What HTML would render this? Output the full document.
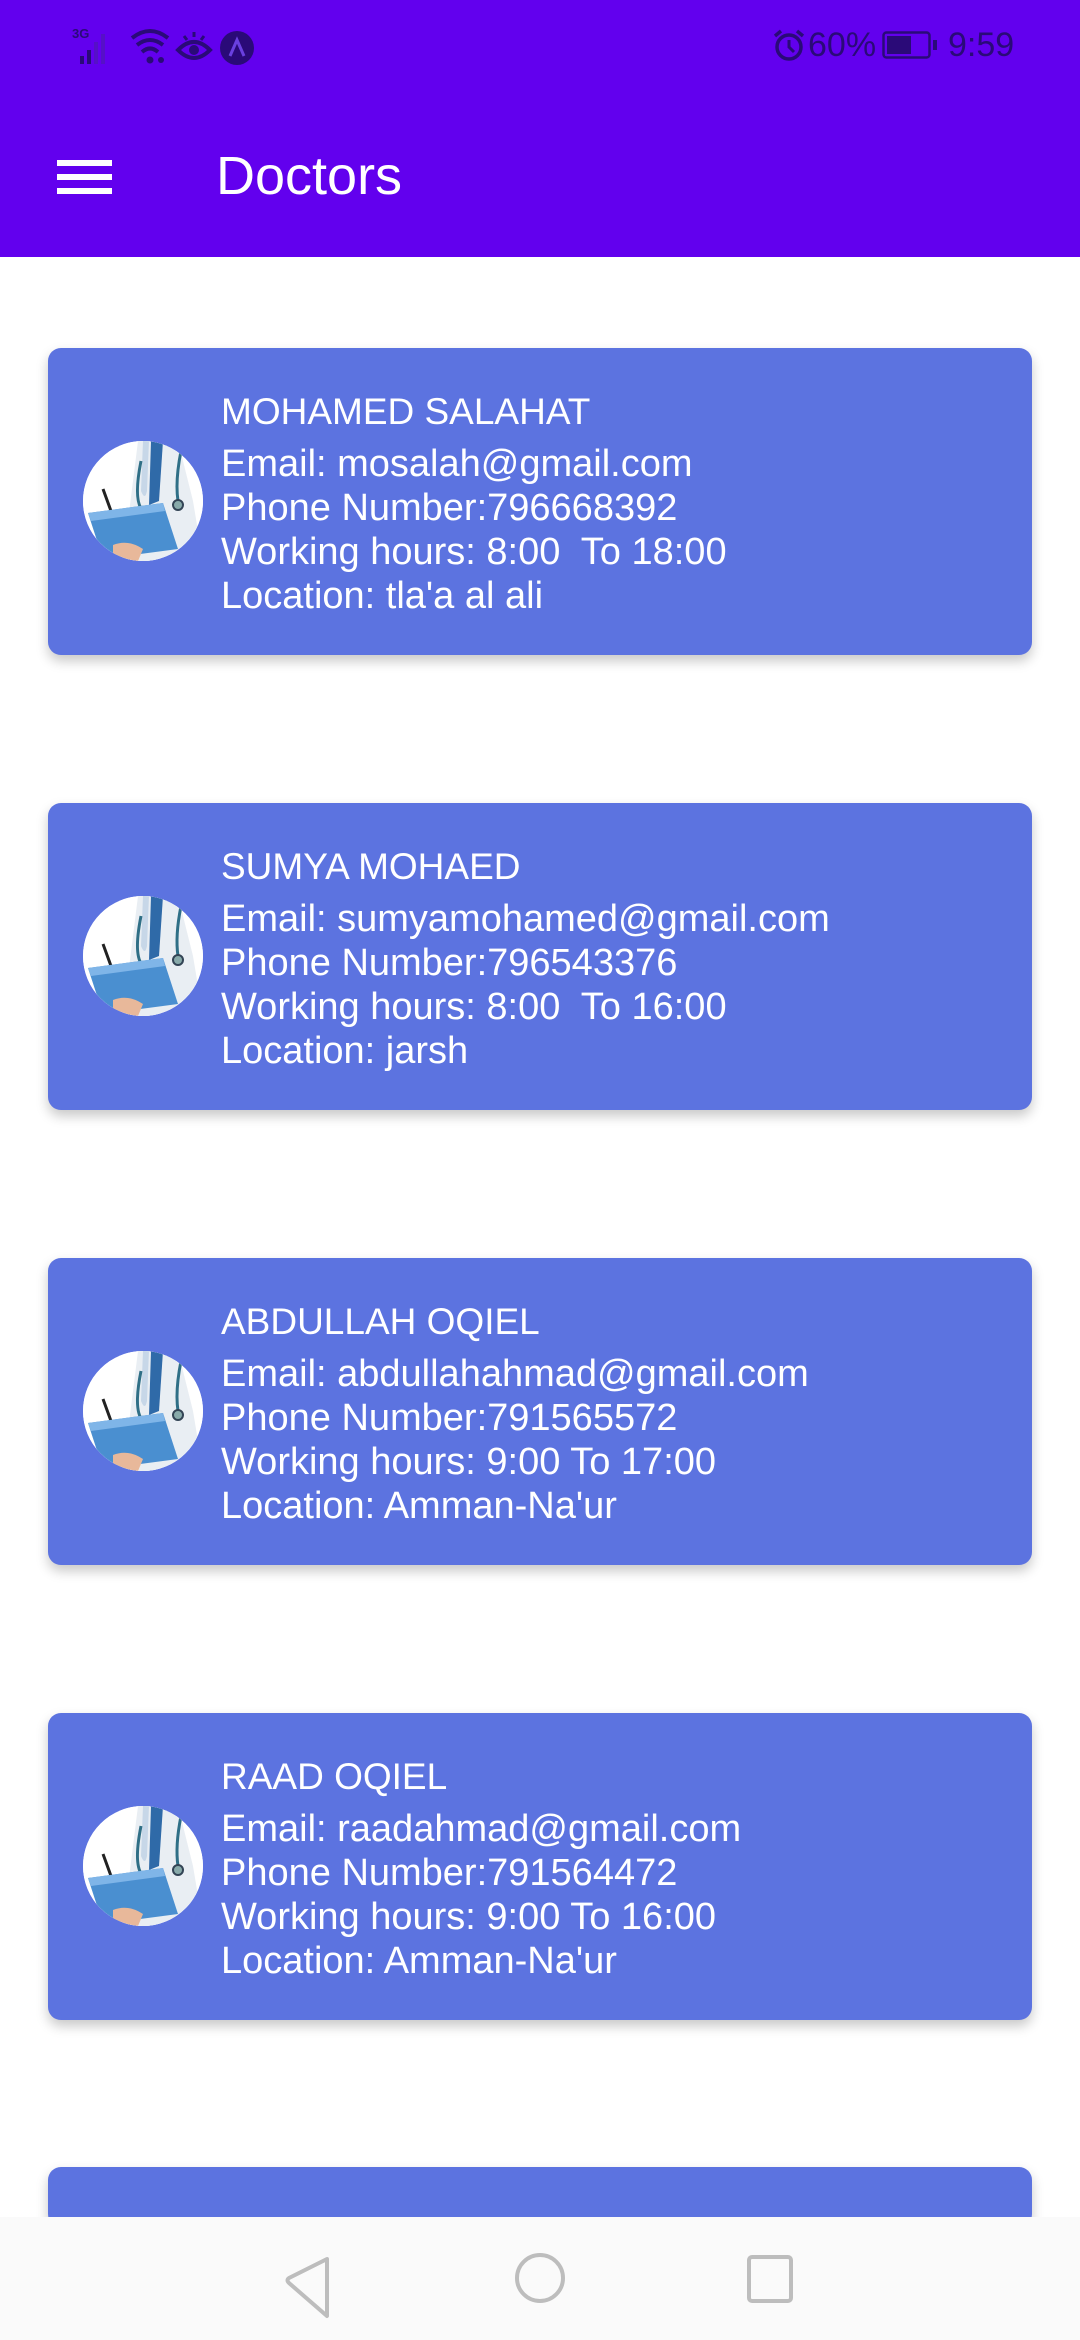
<!DOCTYPE html>
<html><head><meta charset="utf-8">
<style>
*{margin:0;padding:0;box-sizing:border-box}
html,body{width:1080px;height:2340px;overflow:hidden}
body{background:#fff;font-family:"Liberation Sans",Roboto,sans-serif;position:relative}
.hdr{position:absolute;left:0;top:0;width:1080px;height:257px;background:#6200ee}
.sb{position:absolute;top:20px;height:50px;color:#2a0a78;font-size:34px;line-height:50px}
.ham{position:absolute;left:57px;width:55px;height:6px;background:#fff}
.title{position:absolute;left:216px;top:146px;font-size:54px;color:#fff;font-weight:500;line-height:60px}
.card{position:absolute;left:48px;width:984px;height:307px;background:#5c73e0;border-radius:13px;box-shadow:0 6px 12px rgba(0,0,0,0.22)}
.av{position:absolute;left:35px;top:93px;width:120px;height:120px;border-radius:50%;overflow:hidden;background:#fff}
.txt{position:absolute;left:173px;top:42px;color:#fff;font-size:38px;line-height:44px;white-space:pre}
.txt .n{font-size:37px;margin-bottom:8px}
.nav{position:absolute;left:0;top:2217px;width:1080px;height:123px;background:#fafafa;z-index:5}
</style></head><body>
<div class="hdr">
  <svg style="position:absolute;left:70px;top:24px" width="190" height="44" viewBox="0 0 190 44">
    <text x="2" y="14" font-size="13" font-family="Liberation Sans" font-weight="bold" fill="#2a0a78">3G</text>
    <rect x="10" y="32" width="4" height="8" fill="#2a0a78"/><rect x="17" y="26" width="4" height="14" fill="#2a0a78"/>
    <rect x="24" y="18" width="4" height="22" fill="#4a20a0" opacity=".5"/><rect x="31" y="10" width="4" height="30" fill="#4a20a0" opacity=".5"/>
    <path d="M62 14 Q80 0 98 14" stroke="#2a0a78" stroke-width="4" fill="none"/>
    <path d="M67 21 Q80 11 93 21" stroke="#2a0a78" stroke-width="4" fill="none"/>
    <path d="M72 28 Q80 21 88 28" stroke="#2a0a78" stroke-width="4" fill="none"/>
    <circle cx="80" cy="36" r="3.5" fill="#2a0a78"/><circle cx="91" cy="36" r="3" fill="#2a0a78"/>
    <path d="M108 26 Q124 10 140 26 Q124 42 108 26Z" stroke="#2a0a78" stroke-width="4" fill="none"/>
    <circle cx="124" cy="26" r="5" fill="#2a0a78"/>
    <path d="M114 12 l3 4 M124 8 v5 M134 12 l-3 4" stroke="#2a0a78" stroke-width="3"/>
    <circle cx="167" cy="24" r="17" fill="#2a0a78"/>
    <path d="M160 32 L167 16 L174 32" stroke="#6a40e0" stroke-width="3" fill="none"/>
  </svg>
  <svg style="position:absolute;left:772px;top:28px" width="34" height="34" viewBox="0 0 34 34">
    <circle cx="17" cy="19" r="12" stroke="#2a0a78" stroke-width="3.5" fill="none"/>
    <path d="M17 12 V19 L22 24" stroke="#2a0a78" stroke-width="3" fill="none"/>
    <path d="M3 8 L9 3 M31 8 L25 3" stroke="#2a0a78" stroke-width="3.5"/>
  </svg>
  <div class="sb" style="left:808px">60%</div>
  <svg style="position:absolute;left:882px;top:31px" width="56" height="28" viewBox="0 0 56 28">
    <rect x="1.5" y="1.5" width="46" height="25" rx="3" stroke="#2a0a78" stroke-width="2.5" fill="none"/>
    <rect x="5" y="5" width="24" height="18" fill="#2a0a78"/>
    <rect x="51" y="9" width="4" height="10" fill="#2a0a78"/>
  </svg>
  <div class="sb" style="left:948px">9:59</div>
  <div class="ham" style="top:160px"></div>
  <div class="ham" style="top:174px"></div>
  <div class="ham" style="top:188px"></div>
  <div class="title">Doctors</div>
</div>

<svg width="0" height="0" style="position:absolute">
  <defs>
    <g id="doc">
      <rect width="120" height="120" fill="#fff"/>
      <path d="M55 0 L95 0 L110 60 L120 120 L40 120 Z" fill="#e9eef3"/>
      <path d="M68 0 L80 0 L76 60 L66 64 Z" fill="#2f6aa8"/>
      <path d="M60 0 L66 0 L64 50 Q62 60 58 50 Z" fill="#c7d7e8"/>
      <path d="M58 20 Q50 60 60 70 M98 10 Q92 40 95 60" stroke="#2f6f86" stroke-width="3" fill="none"/>
      <circle cx="95" cy="64" r="5" fill="#8aa" stroke="#345" stroke-width="2"/>
      <path d="M20 48 L28 70" stroke="#222" stroke-width="3"/>
      <path d="M5 72 L80 62 L95 108 L20 118 Z" fill="#4a8fd0"/>
      <path d="M5 72 L80 62 L82 70 L8 80 Z" fill="#7fb5e8"/>
      <path d="M30 104 Q45 98 60 108 L55 120 L30 120 Z" fill="#e8b89a"/>
    </g>
  </defs>
</svg>

<div class="card" style="top:348px"><div class="av"><svg width="120" height="120"><use href="#doc"/></svg></div>
<div class="txt"><div class="n">MOHAMED SALAHAT</div>Email: mosalah@gmail.com
Phone Number:796668392
Working hours: 8:00  To 18:00
Location: tla'a al ali</div></div>

<div class="card" style="top:803px"><div class="av"><svg width="120" height="120"><use href="#doc"/></svg></div>
<div class="txt"><div class="n">SUMYA MOHAED</div>Email: sumyamohamed@gmail.com
Phone Number:796543376
Working hours: 8:00  To 16:00
Location: jarsh</div></div>

<div class="card" style="top:1258px"><div class="av"><svg width="120" height="120"><use href="#doc"/></svg></div>
<div class="txt"><div class="n">ABDULLAH OQIEL</div>Email: abdullahahmad@gmail.com
Phone Number:791565572
Working hours: 9:00 To 17:00
Location: Amman-Na'ur</div></div>

<div class="card" style="top:1713px"><div class="av"><svg width="120" height="120"><use href="#doc"/></svg></div>
<div class="txt"><div class="n">RAAD OQIEL</div>Email: raadahmad@gmail.com
Phone Number:791564472
Working hours: 9:00 To 16:00
Location: Amman-Na'ur</div></div>

<div class="card" style="top:2167px;height:60px"></div>

<div class="nav">
  <svg style="position:absolute;left:0;top:0" width="1080" height="123" viewBox="0 0 1080 123">
    <path d="M327 42 L289 61 Q286 63 289 66 L327 99 Z" stroke="#bdbdbd" stroke-width="4" fill="none" stroke-linejoin="round"/>
    <circle cx="540" cy="61" r="23" stroke="#bdbdbd" stroke-width="4" fill="none"/>
    <rect x="749" y="40" width="42" height="44" rx="3" stroke="#bdbdbd" stroke-width="4" fill="none"/>
  </svg>
</div>
</body></html>
